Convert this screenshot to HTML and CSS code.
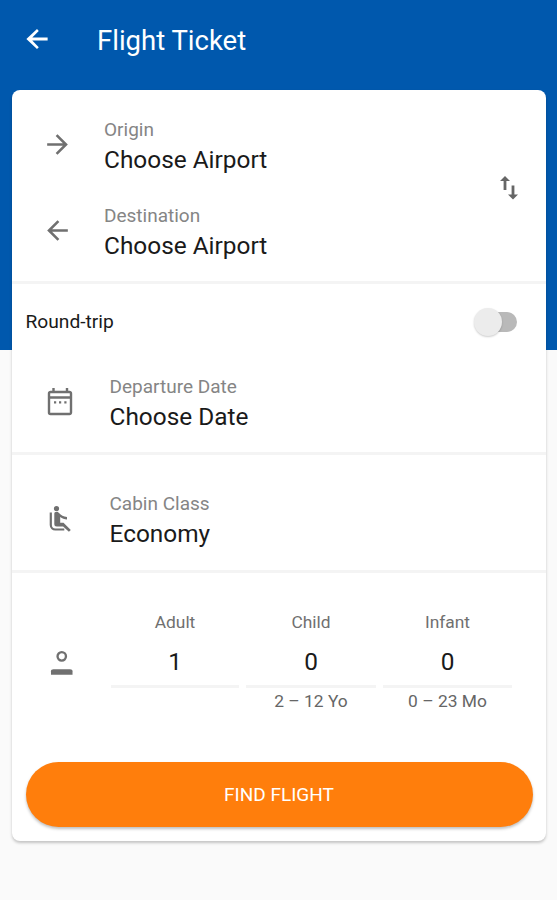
FILE: index.html
```html
<!DOCTYPE html>
<html lang="en">
<head>
  <meta charset="UTF-8" />
  <title>Flight Ticket</title>
  <link rel="stylesheet" href="styles.css">
</head>
<body>
  <header class="topbar">
    <svg class="back" viewBox="0 0 24 24"><path d="M20.500 10.800H8.200l5.200-5.300L12 4l-8.500 8 8.500 8 1.400-1.500-5.200-5.300h12.300z"/></svg>
    <h1>Flight Ticket</h1>
  </header>

  <main class="card">
    <!-- Route -->
    <section class="route">
      <div class="places">
        <div class="field">
          <svg class="icon arrow" viewBox="0 0 24 24"><path d="M12 4l-1.410 1.410L16.170 11H4v2h12.170l-5.580 5.590L12 20l8-8z"/></svg>
          <div class="text">
            <span class="label">Origin</span>
            <span class="value">Choose Airport</span>
          </div>
        </div>
        <div class="field">
          <svg class="icon arrow" viewBox="0 0 24 24"><path d="M20 11H7.830l5.590-5.590L12 4l-8 8 8 8 1.410-1.410L7.830 13H20v-2z"/></svg>
          <div class="text">
            <span class="label">Destination</span>
            <span class="value">Choose Airport</span>
          </div>
        </div>
      </div>
      <svg class="swap" viewBox="0 0 20 26"><path d="M6 1L1 6h3.600v9h2.800V6H11zM14 24.500l5-5h-3.600v-9h-2.800v9H9z"/></svg>
    </section>

    <!-- Dates -->
    <section class="dates">
      <div class="roundtrip">
        <span>Round-trip</span>
        <div class="switch"><div class="thumb"></div></div>
      </div>
      <div class="field wide">
        <svg class="icon" viewBox="0 0 28 28">
          <path d="M4.500 4h19a1.500 1.500 0 0 1 1.500 1.500v19a1.500 1.500 0 0 1-1.500 1.500h-19a1.500 1.500 0 0 1-1.500-1.500v-19a1.500 1.500 0 0 1 1.500-1.500zM3 9.500h22M7.500 0v4M21 0v4" fill="none" stroke="#707070" stroke-width="2.400"/>
          <path d="M8 13.300h2.200v2.200H8zM13 13.300h2.200v2.200H13zM18.300 13.300h2.200v2.200h-2.200z"/>
        </svg>
        <div class="text">
          <span class="label">Departure Date</span>
          <span class="value">Choose Date</span>
        </div>
      </div>
    </section>

    <!-- Cabin -->
    <section class="cabin">
      <div class="field wide">
        <svg class="icon" viewBox="0 0 28 28">
          <circle cx="10.500" cy="3.500" r="2.600"/>
          <path d="M8.300 8.500c0-1 1-1.700 2.200-1.700 1.200 0 1.700.5 2.500 1.300 2 2.100 4.500 3.600 8 3.900v2.400c-2.600 0-4.800-.9-6.800-2.300v5.600h3.300l7.300 7.200-1.900 1.800-5.800-5.300h-6.300a2.500 2.500 0 0 1-2.500-2.500z"/>
          <path d="M4.800 7.500v12.500a4.500 4.500 0 0 0 4.500 4.500h9" fill="none" stroke="#707070" stroke-width="2.200"/>
        </svg>
        <div class="text">
          <span class="label">Cabin Class</span>
          <span class="value">Economy</span>
        </div>
      </div>
    </section>

    <!-- Passengers -->
    <section class="passengers">
      <svg class="person" viewBox="0 0 24 26">
        <circle cx="12" cy="6.200" r="4.300" fill="none" stroke="#707070" stroke-width="2.400"/>
        <path d="M1 25v-3.500c0-1.300 1-2 2.500-2h17c1.500 0 2.500.7 2.500 2V25z"/>
      </svg>
      <div class="counts">
        <div class="count">
          <span class="type">Adult</span>
          <span class="number">1</span>
        </div>
        <div class="count">
          <span class="type">Child</span>
          <span class="number">0</span>
          <span class="hint">2 – 12 Yo</span>
        </div>
        <div class="count">
          <span class="type">Infant</span>
          <span class="number">0</span>
          <span class="hint">0 – 23 Mo</span>
        </div>
      </div>
    </section>

    <button class="find">FIND FLIGHT</button>
  </main>
</body>
</html>
```

FILE: styles.css
```css
* { box-sizing: border-box; }
body {
  margin: 0;
  height: 900px;
  font-family: Roboto, sans-serif;
  color: #1a1a1a;
  background: linear-gradient(#0058ad 350px, #fafafa 350px);
  overflow: hidden;
}
.topbar {
  display: flex;
  align-items: center;
  height: 80px;
  padding-left: 22px;
}
.back {
  width: 30px;
  height: 30px;
  margin-top: -2px;
  fill: #fff;
}
h1 {
  margin: 0 0 0 45px;
  font-size: 27.5px;
  font-weight: 400;
  color: #fff;
}
.card {
  width: 534px;
  height: 751px;
  margin: 10px 0 0 12px;
  background: #fff;
  border-radius: 8px;
  box-shadow: 0 2px 3px rgba(0,0,0,0.22);
}
.route, .dates, .cabin {
  border-bottom: 3px solid #f4f4f4;
}
.route {
  display: flex;
  align-items: center;
  justify-content: space-between;
  height: 194px;
  padding: 4px 27px 0 30px;
}
.places {
  display: grid;
  gap: 26px;
}
.field {
  display: flex;
  align-items: center;
}
.icon {
  width: 28px;
  height: 28px;
  fill: #707070;
}
.arrow {
  width: 31px;
  height: 31px;
}
.text {
  margin-left: 31px;
}
.label, .value {
  display: block;
  line-height: 30px;
  white-space: nowrap;
}
.label {
  font-size: 19px;
  color: #858585;
}
.value {
  font-size: 24.4px;
}
.swap {
  width: 20px;
  height: 26px;
  fill: #666;
}
.dates {
  height: 171px;
}
.roundtrip {
  display: flex;
  align-items: center;
  justify-content: space-between;
  height: 75px;
  padding: 0 29px 0 13.5px;
  font-size: 19.2px;
}
.switch {
  display: flex;
  align-items: center;
  width: 38px;
  height: 20px;
  border-radius: 10px;
  background: #b9b9b9;
}
.thumb {
  flex: none;
  width: 28px;
  height: 28px;
  margin-left: -5px;
  border-radius: 50%;
  background: #ececec;
  box-shadow: 0 1px 2px rgba(0,0,0,0.2);
}
.wide {
  padding: 12px 0 0 33.5px;
}
.wide .text {
  margin-left: 36px;
}
.dates .wide {
  padding-top: 13px;
}
.cabin {
  height: 118px;
  padding-top: 22px;
}
.passengers {
  display: flex;
  padding: 34px 34px 0 38px;
  height: 189px;
}
.person {
  width: 24px;
  height: 26px;
  margin-top: 43px;
  fill: #707070;
}
.counts {
  display: grid;
  flex: none;
  grid-template-columns: 128px 130px 129px;
  gap: 7px;
  margin-left: 37.5px;
}
.count {
  text-align: center;
}
.type, .number, .hint {
  display: block;
}
.type {
  font-size: 17.4px;
  line-height: 30px;
  color: #707070;
}
.number {
  height: 51px;
  font-size: 24.4px;
  line-height: 50px;
  border-bottom: 3px solid #f4f4f4;
}
.hint {
  font-size: 17.4px;
  line-height: 26px;
  color: #666;
}
.find {
  display: block;
  width: 507px;
  height: 65px;
  margin: 0 0 0 13.5px;
  border: 0;
  border-radius: 33px;
  background: #ff7e0c;
  color: #fff;
  font: 400 19px Roboto, sans-serif;
  box-shadow: 0 2px 3px rgba(0,0,0,0.25);
}
```
